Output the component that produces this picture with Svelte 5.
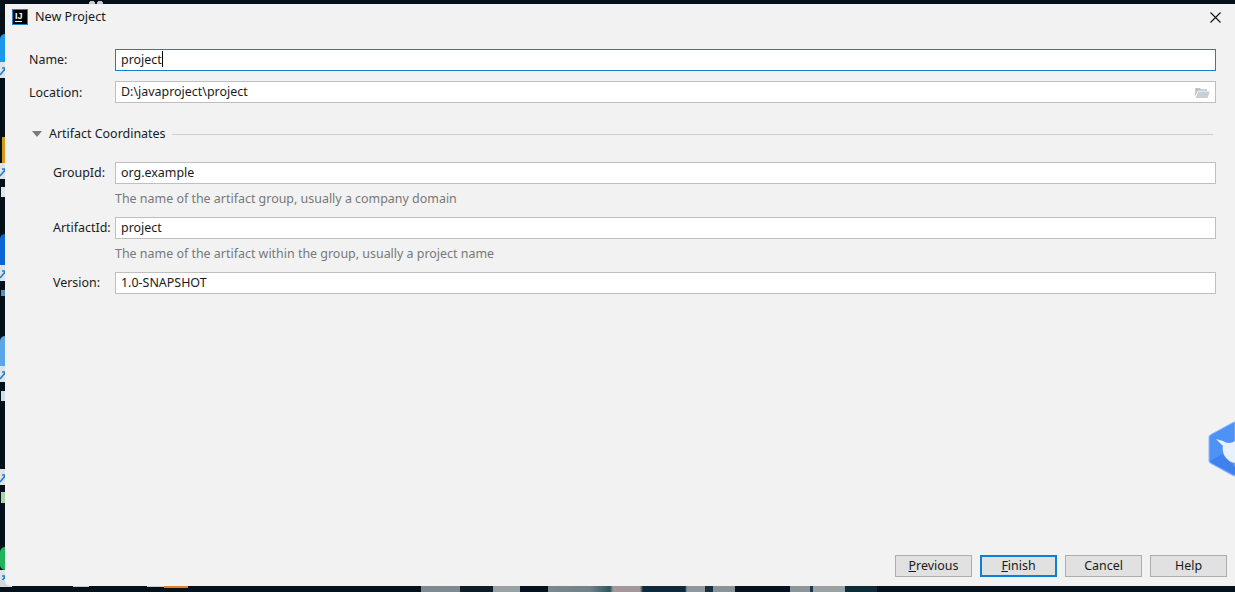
<script>
  const fields = [
    { label: 'GroupId:', value: 'org.example', hint: 'The name of the artifact group, usually a company domain' },
    { label: 'ArtifactId:', value: 'project', hint: 'The name of the artifact within the group, usually a project name' },
    { label: 'Version:', value: '1.0-SNAPSHOT', hint: '' }
  ];
  const shortcuts = [62, 163, 265, 366, 469, 570];
  const specks = [
    { y: 187, h: 10, c: '#dfe6ea' },
    { y: 290, h: 6, c: '#5f8fb5' },
    { y: 391, h: 10, c: '#cfe0ea' },
    { y: 492, h: 11, c: '#a9d6a4' }
  ];
</script>

<div class="desktop">
  <div class="deco d-top"></div>
  <div class="deco d-blue1"></div>
  <div class="deco d-gold"></div>
  <div class="deco d-blue2"></div>
  <div class="deco d-blue3"></div>
  <div class="deco d-green"></div>
  {#each specks as s}
    <div class="deco speck" style="top:{s.y}px;height:{s.h}px;background:{s.c}"></div>
  {/each}
  {#each shortcuts as y}
    <svg class="deco shortcut" style="top:{y}px" width="5" height="16" viewBox="0 0 5 16"><rect width="5" height="16" fill="#dfe3e6"/><path d="M0 13 L5 7 M2 6 H5 V9" stroke="#1f7fd0" stroke-width="1.6" fill="none"/></svg>
  {/each}
  <div class="corner"></div>
  <div class="strip s1"></div>
  <div class="strip s2"></div>
  <div class="strip s3"></div>
  <div class="strip s4"></div>

  <main class="dialog">
    <header class="titlebar">
      <svg class="logo" width="16" height="16" viewBox="0 0 16 16">
        <rect x="0" y="0" width="16" height="16" fill="#1b82d8"/>
        <rect x="1" y="1" width="14" height="14" fill="#000"/>
        <text x="3" y="9.5" class="logo-text">IJ</text>
        <rect x="3" y="12" width="7" height="1" fill="#fff"/>
      </svg>
      <span class="title">New Project</span>
      <svg class="close" width="11" height="11" viewBox="0 0 11 11"><path d="M0.5 0.5 L10.5 10.5 M10.5 0.5 L0.5 10.5" stroke="#111" stroke-width="1.1" fill="none"/></svg>
    </header>

    <section class="top-form">
      <div class="row">
        <span class="label">Name:</span>
        <div class="input focused">project<span class="caret"></span></div>
      </div>
      <div class="row">
        <span class="label loc">Location:</span>
        <div class="input">
          D:\javaproject\project
          <svg class="folder" width="15" height="11" viewBox="0 0 16 12">
            <path d="M0 1 H5 L6.5 2.5 H13 V4 H3 L0 10 Z" fill="#bcc3c9"/>
            <path d="M3.5 5 H16 L13.5 12 H0.5 Z" fill="#c9cfd4"/>
          </svg>
        </div>
      </div>
    </section>

    <div class="group-head">
      <span class="triangle"></span>
      <span class="group-title">Artifact Coordinates</span>
      <span class="rule"></span>
    </div>

    <section class="coords">
      {#each fields as f}
        <div class="row">
          <span class="label">{f.label}</span>
          <div class="input">{f.value}</div>
        </div>
        {#if f.hint}<div class="hint">{f.hint}</div>{/if}
      {/each}
    </section>

    <footer class="buttons">
      <button><u>P</u>revious</button>
      <button class="primary"><u>F</u>inish</button>
      <button>Cancel</button>
      <button>Help</button>
    </footer>

    <svg class="bird" width="27" height="56" viewBox="0 0 27 56">
      <path d="M1 16 Q1 14.5 3 13.5 L24 2 Q26 1 27 1 V55 Q26 55 24 54 L3 42.5 Q1 41.5 1 40 Z" fill="#4f92f7" stroke="#8fb9fa" stroke-width="1"/>
      <path d="M2 40 L14 33 L27 46 V54 L4 42 Z" fill="#3f80ec"/>
      <path d="M8 18 L15 20 Q21 24 27 20 V42 Q20 41 16 34 Q14 28 15 25 Z" fill="#e8f1ff"/>
    </svg>
  </main>
</div>

<style>
  :global(body) { margin: 0; }
  .desktop {
    position: relative;
    width: 1235px;
    height: 592px;
    overflow: hidden;
    background: #04101a;
    font-family: "Noto Sans", "Open Sans", sans-serif;
    font-size: 12.45px;
    color: #1a1a1a;
  }
  .deco { position: absolute; left: 0; width: 5px; }
  .d-top {
    left: 88px;
    width: 16px;
    height: 4px;
    top: 0;
    background:
      radial-gradient(circle at 4px 4px, #c9c9c9 3px, transparent 3.5px),
      radial-gradient(circle at 12px 4px, #c9c9c9 3px, transparent 3.5px);
  }
  .d-blue1 { top: 34px; height: 28px; background: #1c97ea; border-top-left-radius: 5px; }
  .d-gold { top: 137px; height: 26px; background: #d59a1e; left: 2px; width: 3px; }
  .d-blue2 { top: 234px; height: 31px; background: #0c66d6; border-top-left-radius: 5px; }
  .d-blue3 { top: 336px; height: 30px; background: #5aa6e6; border-top-left-radius: 5px; }
  .d-green { top: 547px; height: 23px; background: #22b45c; border-radius: 5px 0 0 5px; }
  .speck { left: 1px; width: 4px; }
  .shortcut { height: 16px; }
  .corner { position: absolute; left: 0; top: 580px; width: 12px; height: 7px; background: #d4d8db; }
  .strip { position: absolute; }
  .s1 { top: 586px; left: 73px; width: 16px; height: 1px; background: #c8c8c8; }
  .s2 { top: 586px; left: 147px; width: 17px; height: 1px; background: #c8c8c8; }
  .s3 { top: 586px; left: 164px; width: 24px; height: 2px; background: #d9822b; }
  .s4 {
    top: 586px;
    left: 0;
    width: 1235px;
    height: 6px;
    background: linear-gradient(90deg,
      transparent 421px,
      #7f8a90 421px, #7f8a90 460px,
      #0c1d28 460px, #0c1d28 493px,
      #9aa1a4 493px, #9aa1a4 520px,
      #06131c 520px, #06131c 548px,
      #7c888c 548px, #6f8388 590px, #2d5560 610px,
      #a3989a 613px, #a3989a 640px,
      #0e2a3a 643px, #0e2a3a 685px,
      #8e979b 687px, #8e979b 705px,
      #16303f 705px, #16303f 713px,
      #8a9397 713px, #8a9397 735px,
      #05121b 735px, #05121b 790px,
      #8d9598 790px, #8d9598 810px,
      #1c3a46 810px, #1c3a46 813px,
      #9aa2a5 813px, #9aa2a5 845px,
      #0d2b38 845px, #0d2b38 877px,
      transparent 877px);
  }
  .dialog {
    position: absolute;
    left: 5px;
    top: 4px;
    width: 1230px;
    height: 582px;
    box-sizing: border-box;
    background: #f2f2f2;
    border-bottom-left-radius: 6px;
    display: flex;
    flex-direction: column;
    overflow: hidden;
  }
  .titlebar {
    display: flex;
    align-items: center;
    height: 28px;
    margin-top: -1px;
    padding: 0 14px 0 7px;
    flex: none;
  }
  .logo { flex: none; }
  .logo-text { font: bold 9px "Liberation Sans", sans-serif; fill: #fff; }
  .title { margin-left: 7px; margin-top: -1px; font-size: 12.6px; }
  .close { margin-left: auto; }
  .top-form { margin-top: 18px; display: flex; flex-direction: column; gap: 10px; }
  .row { display: flex; align-items: center; height: 22px; }
  .label { flex: none; margin-top: -1px; }
  .label.loc { margin-top: 1px; }
  .top-form .label { width: 86px; padding-left: 24px; }
  .input {
    position: relative;
    flex: 1;
    height: 22px;
    box-sizing: border-box;
    margin-right: 19px;
    border: 1px solid #bfbfbf;
    background: #fff;
    padding-left: 5px;
    line-height: 19px;
    white-space: nowrap;
    color: #1a1a1a;
  }
  .focused { border-color: #1580d0; }
  .caret { display: inline-block; width: 1px; height: 16px; background: #000; vertical-align: -3px; }
  .folder { position: absolute; right: 5px; top: 5px; }
  .group-head {
    display: flex;
    align-items: center;
    margin: 20px 22px 0 27px;
    height: 22px;
    gap: 6px;
  }
  .group-title { margin-top: -2px; }
  .triangle { width: 0; height: 0; border-left: 5px solid transparent; border-right: 5px solid transparent; border-top: 6px solid #7a7a7a; margin-right: 1px; }
  .rule { flex: 1; height: 1px; background: #cdcdcd; }
  .coords { margin-top: 17px; }
  .coords .label { width: 62px; padding-left: 48px; }
  .hint { height: 33px; line-height: 30px; padding-left: 110px; color: #787878; }
  .buttons {
    margin-top: auto;
    display: flex;
    justify-content: flex-end;
    gap: 8px;
    padding: 0 8px 9px 0;
  }
  button {
    width: 77px;
    height: 22px;
    box-sizing: border-box;
    border: 1px solid #adadad;
    background: #e1e1e1;
    font: inherit;
    color: #1a1a1a;
    padding: 0 0 2px;
    line-height: 17px;
  }
  .primary { border: 2px solid #0f7fd6; padding: 0 0 1px; line-height: 16px; }
  .bird { position: absolute; right: 0; top: 417px; }
</style>
